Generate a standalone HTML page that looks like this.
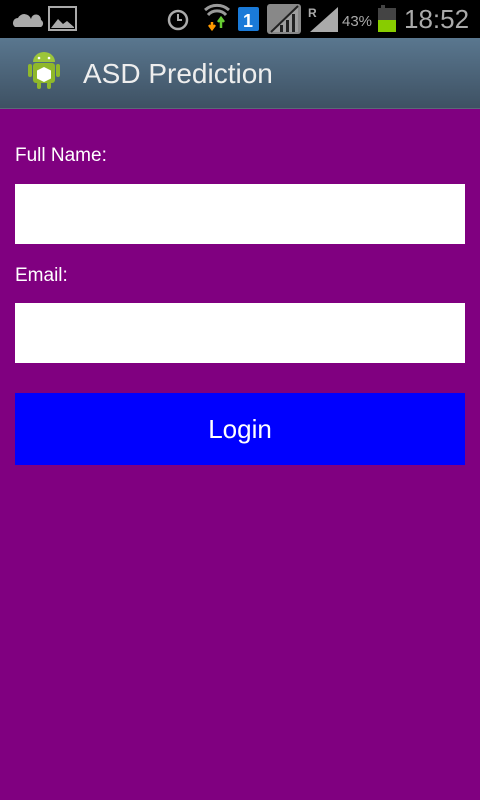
<!DOCTYPE html>
<html><head><meta charset="utf-8"><style>
*{margin:0;padding:0;box-sizing:border-box}
body{width:480px;height:800px;background:#800080;font-family:"Liberation Sans",sans-serif;position:relative;overflow:hidden}
#sb{position:absolute;top:0;left:0;width:480px;height:38px;background:#000}
#ab{position:absolute;top:38px;left:0;width:480px;height:71px;background:linear-gradient(#5a778f,#3e5163);border-bottom:1px solid #5a6a78}
.t{position:absolute;color:#fff}
.f{position:absolute;left:15px;width:450px;height:60px;background:#fff}
</style></head><body>
<div id="sb">
<svg width="480" height="38" style="position:absolute;left:0;top:0">
<path d="M15 27 a5 5 0 0 1 3-9 a7 7 0 0 1 13 1 a4 4 0 0 1 10 1 a4 4 0 0 1 0 7z" fill="#aaa"/>
<rect x="49" y="7" width="27" height="23" fill="none" stroke="#aaa" stroke-width="2"/>
<path d="M51 28 l7-9 5 5 4-3 7 6v1z" fill="#aaa"/>
<circle cx="178" cy="20" r="9" fill="none" stroke="#aaa" stroke-width="2.5"/>
<path d="M178 14v6h4" fill="none" stroke="#aaa" stroke-width="2"/>
<path d="M205 10 a18 18 0 0 1 24 0" fill="none" stroke="#999" stroke-width="3"/>
<path d="M208 15 a12 12 0 0 1 18 0" fill="none" stroke="#999" stroke-width="3"/>
<path d="M212 22v6 M209 25l3 4 3-4" stroke="#f90" stroke-width="2.5" fill="none"/>
<path d="M221 28v-8 M218 22l3-4 3 4" stroke="#6c3" stroke-width="2.5" fill="none"/>
<rect x="238" y="7" width="21" height="24" rx="2" fill="#1a7ad8"/>
<text x="243" y="27" fill="#fff" font-size="18" font-weight="bold" font-family="Liberation Sans">1</text>
<rect x="267" y="4" width="34" height="30" rx="3" fill="#888"/>
<path d="M271 32 L298 6 V32z" fill="#fff" opacity=".2"/>
<path d="M271 32 L298 6" stroke="#222" stroke-width="2"/>
<rect x="280" y="25" width="3" height="7" fill="#222"/><rect x="286" y="20" width="3" height="12" fill="#222"/><rect x="292" y="14" width="3" height="18" fill="#222"/>
<text x="308" y="17" fill="#aaa" font-size="12" font-weight="bold" font-family="Liberation Sans">R</text>
<path d="M310 32 L338 7 V32z" fill="#aaa"/>
<text x="342" y="26" fill="#aaa" font-size="15" font-family="Liberation Sans">43%</text>
<rect x="381" y="5" width="4" height="3" fill="#444"/>
<rect x="378" y="8" width="18" height="12" fill="#444"/>
<rect x="378" y="20" width="18" height="12" fill="#8c0"/>
<text x="404" y="28" fill="#aaa" font-size="26" font-family="Liberation Sans">18:52</text>
</svg></div>
<div id="ab">
<svg width="60" height="60" style="position:absolute;left:25px;top:12px">
<rect x="8" y="13" width="22" height="20" rx="3" fill="#8fb82a"/>
<path d="M8 12 a11 10 0 0 1 22 0z" fill="#9cc53a"/>
<circle cx="14" cy="8" r="1.3" fill="#fff"/><circle cx="24" cy="8" r="1.3" fill="#fff"/>
<rect x="3" y="14" width="4" height="13" rx="2" fill="#8fb82a"/><rect x="31" y="14" width="4" height="13" rx="2" fill="#8fb82a"/>
<rect x="12" y="32" width="4" height="7" rx="2" fill="#8fb82a"/><rect x="22" y="32" width="4" height="7" rx="2" fill="#8fb82a"/>
<path d="M19 17 l7 3.5v8l-7 3.5-7-3.5v-8z" fill="#fff"/>
</svg>
<div class="t" style="left:83px;top:20px;font-size:28px;color:#eee">ASD Prediction</div>
</div>
<div class="t" style="left:15px;top:145px;font-size:19px">Full Name:</div>
<div class="f" style="top:184px"></div>
<div class="t" style="left:15px;top:265px;font-size:19px">Email:</div>
<div class="f" style="top:303px"></div>
<div style="position:absolute;left:15px;top:393px;width:450px;height:72px;background:#00f;color:#fff;font-size:26px;text-align:center;line-height:72px">Login</div>
</body></html>
